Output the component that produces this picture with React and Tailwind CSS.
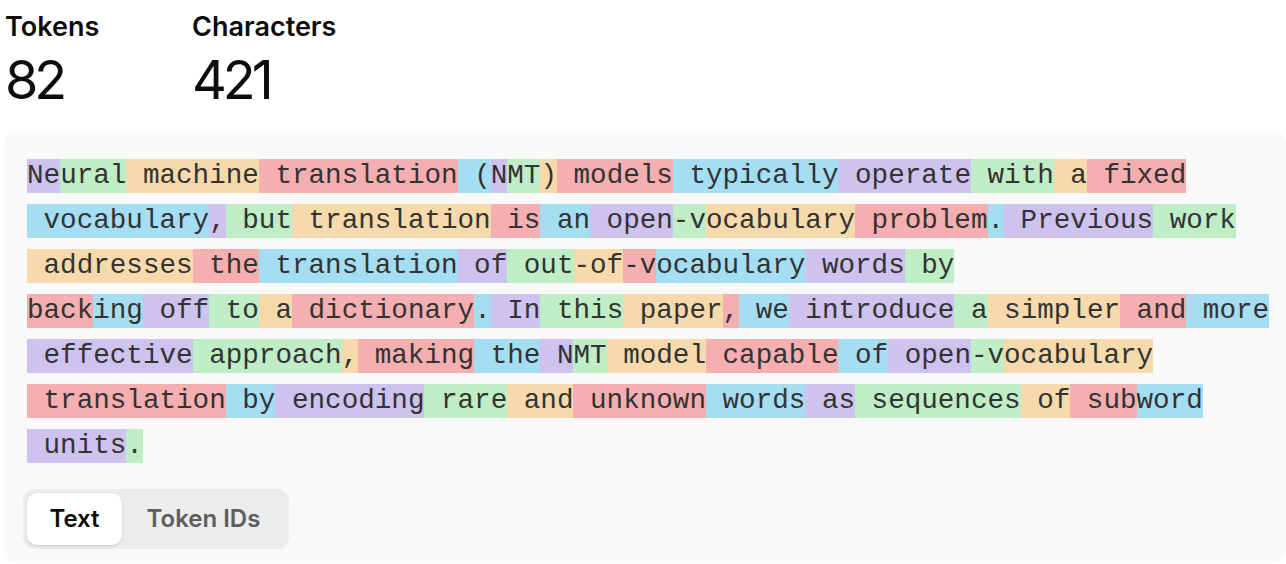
import { useState } from 'react';

// token text; colour cycles by index (purple, green, orange, red, blue)
const TOKENS = [
  'Ne', 'ural', ' machine', ' translation', ' (', 'N', 'MT', ')', ' models', ' typically',
  ' operate', ' with', ' a', ' fixed', ' vocabulary', ',', ' but', ' translation', ' is', ' an',
  ' open', '-v', 'ocabulary', ' problem', '.', ' Previous', ' work', ' addresses', ' the',
  ' translation', ' of', ' out', '-of', '-v', 'ocabulary', ' words', ' by', '\n', 'back', 'ing',
  ' off', ' to', ' a', ' dictionary', '.', ' In', ' this', ' paper', ',', ' we', ' introduce',
  ' a', ' simpler', ' and', ' more', ' effective', ' approach', ',', ' making', ' the', ' N',
  'MT', ' model', ' capable', ' of', ' open', '-v', 'ocabulary', ' translation', ' by',
  ' encoding', ' rare', ' and', ' unknown', ' words', ' as', ' sequences', ' of', ' sub', 'word',
  ' units', '.',
];

const COLORS = ['bg-[#cec2ef]', 'bg-[#bfeec6]', 'bg-[#f7daab]', 'bg-[#f5afb1]', 'bg-[#a5def3]'];

function Stat({ label, value, className }) {
  return (
    <div className={className}>
      <div className="text-[27px] font-semibold leading-[34px] text-[#0d0d0d]">{label}</div>
      <div className="mt-[9px] text-[54px] leading-[54px] tracking-[-0.075em] text-[#0d0d0d]">{value}</div>
    </div>
  );
}

export default function App() {
  const [tab, setTab] = useState('text');

  return (
    <main className="min-h-screen overflow-hidden bg-white pt-[10px] font-['Inter',sans-serif]">
      <div className="flex pl-[4px]">
        <Stat label="Tokens" value="82" className="w-[188px] pl-[1px]" />
        <Stat label="Characters" value="421" />
      </div>

      <section className="ml-[4px] mt-[24px] w-[1282px] rounded-[12px] bg-[#f9f9f9] pb-[14px] pl-[23px] pr-[12px] pt-[22px]">
        <div className="font-['Liberation_Mono',monospace] text-[27.6px] leading-[45px] text-[#333333]">
          {TOKENS.map((t, i) =>
            t === '\n' ? (
              <br key={i} />
            ) : (
              <span key={i} className={`inline-block whitespace-pre leading-[34px] ${COLORS[i % 5]}`}>
                {t}
              </span>
            )
          )}
        </div>

        <div className="-ml-[4px] mt-[21px] flex h-[60px] w-[266px] rounded-[12px] bg-[#ececec] p-[4px]">
          <button
            type="button"
            onClick={() => setTab('text')}
            className={`h-[52px] w-[95px] rounded-[10px] text-[24px] font-semibold ${
              tab === 'text' ? 'bg-white text-[#0d0d0d] shadow-[0_1px_3px_rgba(0,0,0,0.15)]' : 'text-[#5d5d5d]'
            }`}
          >
            Text
          </button>
          <button
            type="button"
            onClick={() => setTab('ids')}
            className={`h-[52px] flex-1 rounded-[10px] text-[24px] font-semibold ${
              tab === 'ids' ? 'bg-white text-[#0d0d0d] shadow-[0_1px_3px_rgba(0,0,0,0.15)]' : 'text-[#5d5d5d]'
            }`}
          >
            Token IDs
          </button>
        </div>
      </section>
    </main>
  );
}
